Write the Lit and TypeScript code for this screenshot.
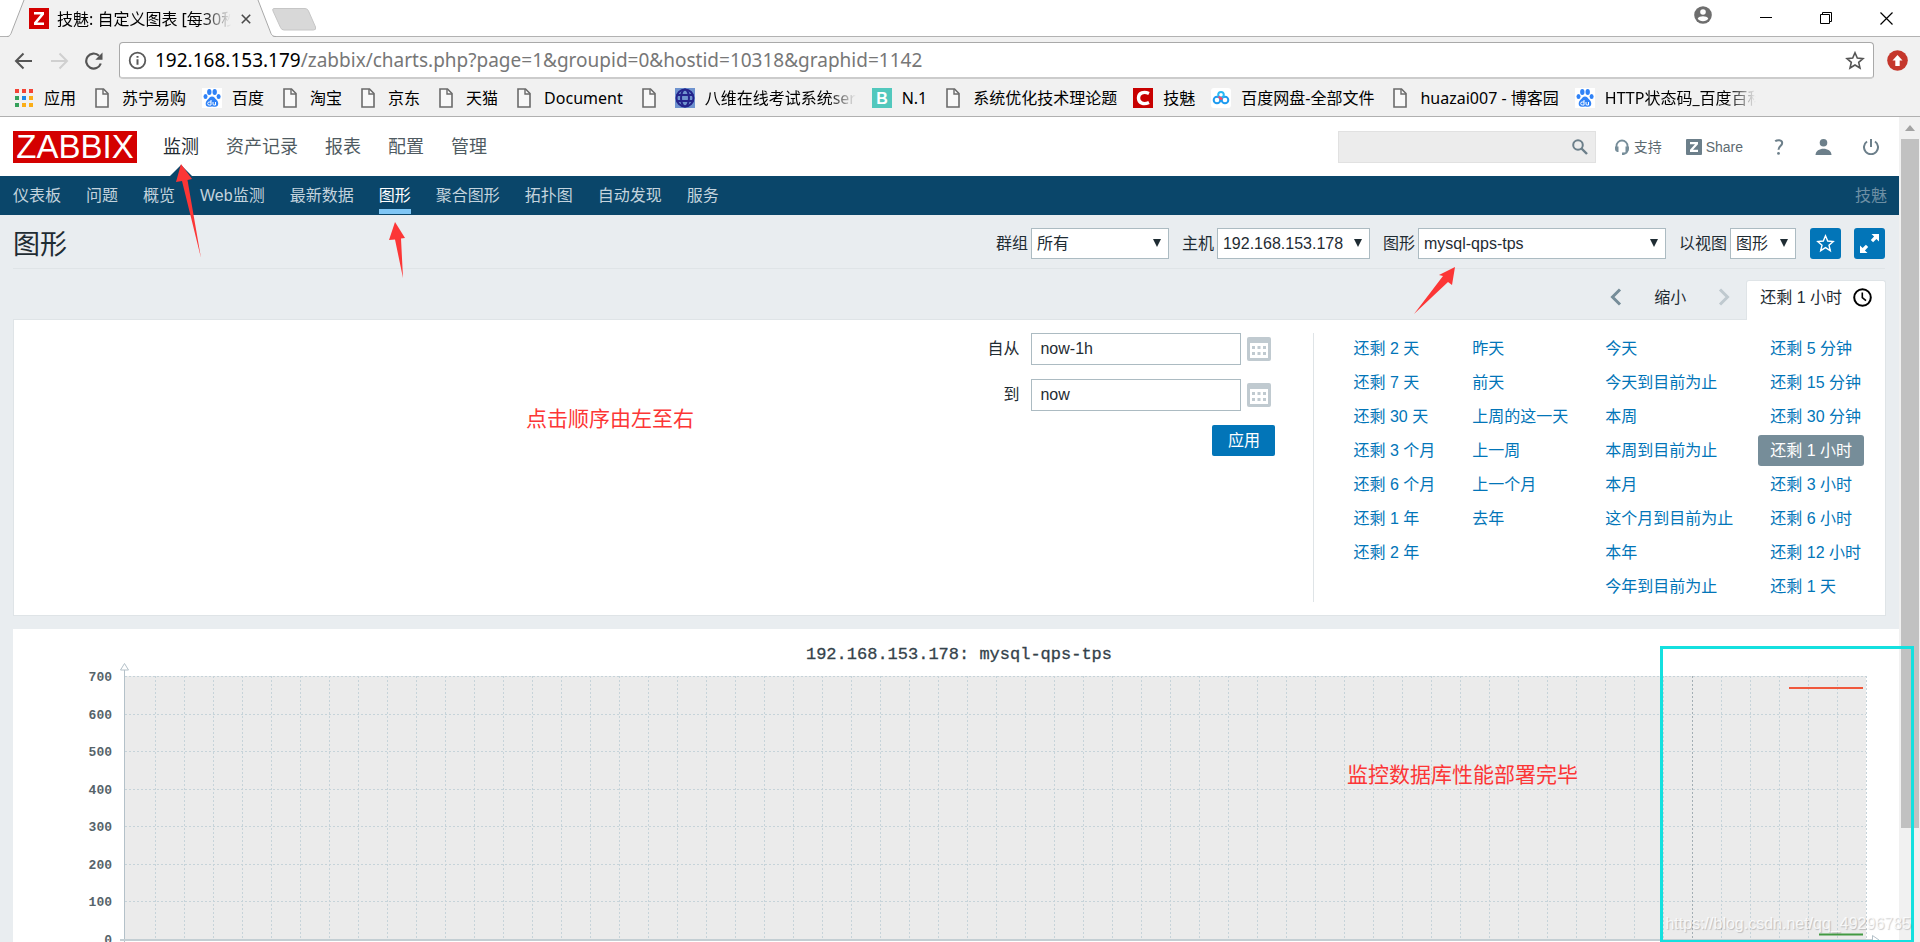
import { LitElement, html, svg, css, TemplateResult } from "lit";
import { customElement, state } from "lit/decorators.js";

type IconName = "apps" | "file" | "paw" | "globe" | "b" | "c" | "pan";

const bookmarks: { icon: IconName; text: string; fade?: boolean }[] = [
  { icon: "apps", text: "应用" },
  { icon: "file", text: "苏宁易购" },
  { icon: "paw", text: "百度" },
  { icon: "file", text: "淘宝" },
  { icon: "file", text: "京东" },
  { icon: "file", text: "天猫" },
  { icon: "file", text: "Document" },
  { icon: "file", text: "" },
  { icon: "globe", text: "八维在线考试系统ser", fade: true },
  { icon: "b", text: "N.1" },
  { icon: "file", text: "系统优化技术理论题" },
  { icon: "c", text: "技魅" },
  { icon: "pan", text: "百度网盘-全部文件" },
  { icon: "file", text: "huazai007 - 博客园" },
  { icon: "paw", text: "HTTP状态码_百度百科", fade: true },
];

const mainMenu = ["监测", "资产记录", "报表", "配置", "管理"];
const subMenu = ["仪表板", "问题", "概览", "Web监测", "最新数据", "图形", "聚合图形", "拓扑图", "自动发现", "服务"];

const ranges = [
  ["还剩 2 天", "还剩 7 天", "还剩 30 天", "还剩 3 个月", "还剩 6 个月", "还剩 1 年", "还剩 2 年"],
  ["昨天", "前天", "上周的这一天", "上一周", "上一个月", "去年"],
  ["今天", "今天到目前为止", "本周", "本周到目前为止", "本月", "这个月到目前为止", "本年", "今年到目前为止"],
  ["还剩 5 分钟", "还剩 15 分钟", "还剩 30 分钟", "还剩 1 小时", "还剩 3 小时", "还剩 6 小时", "还剩 12 小时", "还剩 1 天"],
];

const icons: Record<IconName, TemplateResult> = {
  apps: html`<svg width="20" height="20" viewBox="0 0 20 20">
    ${["#f44336", "#f44336", "#f44336", "#34a05a", "#1e88e5", "#fbae17", "#34a05a", "#fbae17", "#fbae17"].map(
      (c, i) => svg`<rect x=${1 + (i % 3) * 7} y=${1 + Math.floor(i / 3) * 7} width="4" height="4" fill=${c} />`
    )}
  </svg>`,
  file: html`<svg width="20" height="20" viewBox="0 0 20 20">
    <path d="M4 1h7.500l4.500 4.500V19H4z" fill="#f8f8f8" stroke="#6b6b6b" stroke-width="1.600" />
    <path d="M11 1v5h5" fill="none" stroke="#6b6b6b" stroke-width="1.400" />
  </svg>`,
  paw: html`<svg width="20" height="20" viewBox="0 0 20 20">
    <rect width="20" height="20" fill="#fff" />
    <g fill="#2f82f7">
      <ellipse cx="7.300" cy="4" rx="2.200" ry="3" />
      <ellipse cx="12.700" cy="4" rx="2.200" ry="3" />
      <ellipse cx="3.500" cy="8.500" rx="2" ry="2.600" />
      <ellipse cx="16.600" cy="8.500" rx="2" ry="2.600" />
      <path d="M10 8.500c2 0 3 1.800 4.500 3.300 2.500 2.300 2.600 7-1.300 7-1.300 0-2-.3-3.200-.3s-2 .3-3.200.3c-3.900 0-3.800-4.700-1.300-7C7 10.300 8 8.500 10 8.500z" />
    </g>
    <path d="M9 12v5H7.200a1.400 1.400 0 0 1 0-3H9M11 14v2a1 1 0 0 0 1 1h1.500v-3" fill="none" stroke="#fff" stroke-width="1" />
  </svg>`,
  globe: html`<svg width="20" height="20" viewBox="0 0 20 20">
    <rect width="20" height="20" fill="#6f93cf" />
    <g fill="none" stroke="#24248c" stroke-width="2">
      <circle cx="10" cy="10" r="8.500" />
      <ellipse cx="10" cy="10" rx="4" ry="8.500" />
      <path d="M1.500 7h17M1.500 13h17" />
    </g>
  </svg>`,
  b: html`<svg width="20" height="20" viewBox="0 0 20 20">
    <rect width="20" height="20" fill="#52c8bd" />
    <text x="10" y="16" text-anchor="middle" font-family="Liberation Sans" font-weight="700" font-size="16" fill="#fff">B</text>
  </svg>`,
  c: html`<svg width="20" height="20" viewBox="0 0 20 20">
    <rect width="20" height="20" fill="#c80000" />
    <path d="M16 5.500c-5-2.300-10.500-1-10.500 4.500s5.500 6.800 10.500 4.500" fill="none" stroke="#fff" stroke-width="3.400" />
  </svg>`,
  pan: html`<svg width="20" height="20" viewBox="0 0 20 20">
    <rect width="20" height="20" rx="3" fill="#fff" />
    <g fill="none" stroke-width="2">
      <circle cx="6" cy="12" r="3.300" stroke="#1e9bf0" />
      <circle cx="14" cy="12" r="3.300" stroke="#1e9bf0" />
      <circle cx="10" cy="6.800" r="2.800" stroke="#27b8f5" />
      <path d="M7.500 8.500A3 3 0 0 0 10 9.800" stroke="#ef4b6c" />
    </g>
    <circle cx="10" cy="10.500" r="1.600" fill="#ef4b6c" />
  </svg>`,
};

@customElement("browser-chrome")
class BrowserChrome extends LitElement {
  static styles = css`
    :host {
      display: block;
      background: #f1f1f1;
      border-bottom: 1px solid #b0b0b0;
      font: 16px/20px "Noto Sans", "Noto Sans CJK SC", sans-serif;
      color: #000;
    }
    * { box-sizing: border-box; }
    svg { display: block; flex: none; }
    button { border: 0; background: none; padding: 0; font: inherit; color: inherit; }
    .tabs {
      display: flex;
      height: 37px;
      background: #fff;
      border-bottom: 1px solid #b2b2b2;
    }
    .tab {
      position: relative;
      width: 270px;
      height: 37px;
      margin-left: 7px;
      display: flex;
      align-items: center;
      padding: 0 26px 0 22px;
    }
    .tab-shape { position: absolute; left: 0; top: 0; }
    .tab > :not(.tab-shape) { position: relative; }
    .title {
      flex: 1;
      margin: 0 10px 0 8px;
      white-space: nowrap;
      overflow: hidden;
      -webkit-mask-image: linear-gradient(90deg, #000 calc(100% - 28px), transparent);
      mask-image: linear-gradient(90deg, #000 calc(100% - 28px), transparent);
    }
    .new-tab { margin: 8px 0 0 -5px; height: 22px; }
    .window-buttons { display: flex; margin: 0 4px 0 auto; }
    .window-buttons button { width: 60px; height: 36px; display: grid; place-items: center; }
    .window-buttons button:first-child { width: 66px; height: 30px; }
    .toolbar { display: flex; align-items: center; height: 37px; margin-top: 5px; padding: 0 12px 0 14px; }
    .toolbar button { margin-right: 15px; }
    .toolbar button:last-child { margin: 0 0 0 13px; }
    .address {
      flex: 1;
      display: flex;
      align-items: center;
      height: 37px;
      padding: 0 8px;
      background: #fff;
      border: 1px solid #a9a9a9;
      border-bottom: 2px solid #ccc;
      border-radius: 4px;
    }
    .url { flex: 1; margin-left: 8px; font-size: 19px; line-height: 24px; color: #777; }
    .url b { font-weight: 400; color: #000; }
    .toolbar .address button { margin: 0; }
    .bookmarks { display: flex; gap: 16px; height: 37px; align-items: center; padding: 0 14px; }
    .bookmarks a { display: flex; align-items: center; gap: 10px; color: #000; text-decoration: none; white-space: nowrap; }
    .fade {
      width: 151px;
      overflow: hidden;
      -webkit-mask-image: linear-gradient(90deg, #000 calc(100% - 28px), transparent);
      mask-image: linear-gradient(90deg, #000 calc(100% - 28px), transparent);
    }
  `;

  render() {
    return html`
      <div class="tabs">
        <div class="tab">
          <svg class="tab-shape" width="270" height="37" viewBox="0 0 270 37">
            <path d="M0 37c2 0 3-1 4-3L17 0h234l13 34c1 2 2 3 5 3z" fill="#f1f1f1" />
            <path d="M0 36.500c2 0 3-1 4-3L17 0M251 0l13 33.500c1 2 2 3 5 3" fill="none" stroke="#a8a8a8" />
          </svg>
          <svg width="20" height="21" viewBox="0 0 20 21">
            <rect width="20" height="21" fill="#d40000" />
            <path d="M5 4h10v2.500L8.300 14.500H15V17H5v-2.500L11.700 6.500H5z" fill="#fff" />
          </svg>
          <span class="title">技魅: 自定义图表 [每30秒</span>
          <button aria-label="关闭标签页">
            <svg width="10" height="10" viewBox="0 0 10 10"><path d="M.8.8l8.400 8.400M9.200.8L.8 9.200" stroke="#4a4a4a" stroke-width="1.600" /></svg>
          </button>
        </div>
        <button class="new-tab" aria-label="新标签页">
          <svg width="45" height="23" viewBox="0 0 45 23"><path d="M2 .5h31q2.500 0 3.500 2.500l7 16q1 3-2 3H12q-2.500 0-3.500-2.500L1 3Q0 .5 2 .5z" fill="#d8d8d8" stroke="#c6c6c6" /></svg>
        </button>
        <div class="window-buttons">
          <button aria-label="用户">
            <svg width="18" height="18" viewBox="0 0 18 18"><circle cx="9" cy="9" r="8.800" fill="#6e6e6e" /><circle cx="9" cy="6" r="2.800" fill="#fff" /><path d="M3.700 12.500c1.500-3 9.100-3 10.600 0-1.800 3.600-8.800 3.600-10.600 0z" fill="#fff" /></svg>
          </button>
          <button aria-label="最小化"><svg width="12" height="12" viewBox="0 0 12 12"><path d="M0 5.500h12" stroke="#000" /></svg></button>
          <button aria-label="还原"><svg width="12" height="12" viewBox="0 0 12 12"><path d="M.5 2.500h9v9h-9zM2.500 2.500v-2h9v9h-2" fill="none" stroke="#000" /></svg></button>
          <button aria-label="关闭"><svg width="13" height="13" viewBox="0 0 13 13"><path d="M.5.5l12 12M12.500.5l-12 12" stroke="#000" stroke-width="1.200" /></svg></button>
        </div>
      </div>
      <div class="toolbar">
        <button aria-label="后退"><svg width="20" height="18" viewBox="0 0 20 18"><path d="M18 9H2.500M9.500 1.500L2 9l7.500 7.500" fill="none" stroke="#555" stroke-width="2" /></svg></button>
        <button aria-label="前进"><svg width="20" height="18" viewBox="0 0 20 18"><path d="M2 9h15.500M10.500 1.500L18 9l-7.500 7.500" fill="none" stroke="#d0d0d0" stroke-width="2" /></svg></button>
        <button aria-label="重新加载"><svg width="20" height="18" viewBox="0 0 20 18"><path d="M16.800 11.500A7.500 7.500 0 1 1 15 3.700" fill="none" stroke="#555" stroke-width="2.200" /><path d="M18.500.5v7.200h-7.200z" fill="#555" /></svg></button>
        <div class="address">
          <svg width="19" height="19" viewBox="0 0 19 19"><circle cx="9.500" cy="9.500" r="7.800" fill="none" stroke="#5a5a5a" stroke-width="1.800" /><path d="M9.500 5v1.800M9.500 8.300v5.500" stroke="#5a5a5a" stroke-width="2" /></svg>
          <span class="url"><b>192.168.153.179</b>/zabbix/charts.php?page=1&amp;groupid=0&amp;hostid=10318&amp;graphid=1142</span>
          <button aria-label="收藏"><svg width="20" height="19" viewBox="0 0 20 19"><path d="M10 1.800l2.300 5.300 5.700.5-4.300 3.800 1.300 5.600-5-3-5 3 1.300-5.600L2 7.600l5.700-.5z" fill="none" stroke="#555" stroke-width="1.600" /></svg></button>
        </div>
        <button aria-label="更新"><svg width="21" height="21" viewBox="0 0 21 21"><circle cx="10.500" cy="10.500" r="10.300" fill="#c5372c" /><path d="M10.500 5l5 5.500h-2.800V16H8.300v-5.500H5.500z" fill="#fff" /></svg></button>
      </div>
      <nav class="bookmarks">
        ${bookmarks.map(
          (b) => html`<a href="#" aria-label=${b.text || "书签"}>${icons[b.icon]}${b.text ? html`<span class=${b.fade ? "fade" : ""}>${b.text}</span>` : ""}</a>`
        )}
      </nav>
    `;
  }
}

@customElement("traffic-chart")
class TrafficChart extends LitElement {
  static styles = css`
    :host { display: block; background: #fff; }
    svg { display: block; width: 100%; height: auto; }
    .title { font: 17px "Liberation Mono", monospace; fill: #35434b; stroke: #35434b; stroke-width: 0.3px; }
    .label { font: 700 13px "Liberation Mono", monospace; fill: #56636a; }
    .grid { stroke: #c6d3d9; stroke-dasharray: 2 2; }
    .hour { stroke: #a3aeb4; stroke-dasharray: 2 2; }
    .axis { stroke: #b4c1c9; fill: none; }
  `;

  render() {
    const left = 112;
    const right = 1853;
    const top = 47;
    const bottom = 310;
    const values = [700, 600, 500, 400, 300, 200, 100, 0];
    const y = (v: number) => Math.round(bottom - (v / 700) * (bottom - top)) + 0.5;
    return html`
      <svg viewBox="0 0 1886 340" role="img" aria-label="192.168.153.178: mysql-qps-tps">
        <text class="title" x="946" y="30" text-anchor="middle">192.168.153.178: mysql-qps-tps</text>
        <rect x=${left} y=${top} width=${right - left} height=${bottom - top} fill="#ebebeb" />
        ${values.slice(0, -1).map((v) => svg`<path class="grid" d="M${left} ${y(v)}H${right}" />`)}
        ${Array.from({ length: 60 }, (_, i) => {
          const x = Math.round(142 + i * 29) + 0.5;
          return svg`<path class=${i === 53 ? "hour" : "grid"} d="M${x} ${top}V${bottom}" />`;
        })}
        ${values.map((v) => svg`<text class="label" x="99" y=${y(v) + 4} text-anchor="end">${v}</text>`)}
        <path class="axis" d="M111.500 41V315" />
        <path d="M107 311H1860" stroke="#c3ced3" stroke-width="2" />
        <path class="axis" d="M111.500 34.500l4 6.500h-8z" fill="#fff" />
        <path class="axis" d="M1866 311l-6.500-4.500v9z" fill="#fff" />
        <path d="M1776 59H1850" stroke="#f0583c" stroke-width="2" />
        <path d="M1806 305.500H1850" stroke="#429a42" stroke-width="2" />
      </svg>
    `;
  }
}

@customElement("time-filter")
class TimeFilter extends LitElement {
  @state() selected = "还剩 1 小时";

  static styles = css`
    :host { display: block; margin: 11px 13px 0; font: 16px/31px "Liberation Sans", "Noto Sans CJK SC", sans-serif; color: #1f2c33; }
    * { box-sizing: border-box; }
    svg { display: block; }
    button { border: 0; background: none; padding: 0; font: inherit; color: inherit; }
    .tabs { position: relative; display: flex; justify-content: flex-end; height: 40px; }
    .nav { display: flex; align-items: center; gap: 32px; margin: 0 16px 6px 0; }
    .current {
      display: flex;
      align-items: center;
      gap: 11px;
      padding: 0 13px 6px;
      background: #fff;
      border: 1px solid #dfe4e7;
      border-bottom: 0;
      border-radius: 3px 3px 0 0;
    }
    .panel {
      display: flex;
      justify-content: flex-end;
      margin-top: -1px;
      padding: 13px 12px;
      background: #fff;
      border: 1px solid #dfe4e7;
    }
    .form { display: grid; grid-template-columns: auto 210px 34px; grid-auto-rows: 32px; gap: 14px 0; margin-right: 38px; align-content: start; }
    .form label { text-align: right; padding-right: 12px; }
    .form input {
      height: 32px;
      padding: 0 8px;
      font: inherit;
      color: inherit;
      background: #fff;
      border: 1px solid #acbbc2;
    }
    .calendar { display: grid; place-items: center; padding-left: 2px; }
    .apply {
      grid-column: 2 / 4;
      justify-self: end;
      width: 63px;
      height: 31px;
      border-radius: 2px;
      color: #fff;
      background: #0275b8;
    }
    .ranges { display: flex; gap: 13px; padding-left: 27px; border-left: 1px solid #dfe4e7; }
    .column { display: flex; flex-direction: column; align-items: flex-start; gap: 3px; }
    .column a { padding: 0 12px; height: 31px; color: #0275b8; text-decoration: none; border-radius: 3px; white-space: nowrap; }
    .column a.on { color: #fff; background: #768d99; }
  `;

  private field(id: string, label: string, value: string) {
    return html`
      <label for=${id}>${label}</label>
      <input id=${id} type="text" .value=${value} />
      <button type="button" class="calendar" aria-label="日历">
        <svg width="24" height="24" viewBox="0 0 24 24">
          <rect width="24" height="24" rx="2" fill="#c0cad0" />
          <rect x="3" y="6" width="18" height="15" fill="#fff" />
          ${[5, 10.5, 16].map((x) => [9, 15].map((y) => svg`<rect x=${x} y=${y} width="3" height="3" fill="#c0cad0" />`))}
        </svg>
      </button>
    `;
  }

  render() {
    return html`
      <div class="tabs">
        <div class="nav">
          <button aria-label="上一段"><svg width="12" height="18" viewBox="0 0 12 18"><path d="M10 1.500L2.500 9l7.500 7.500" fill="none" stroke="#768d99" stroke-width="3" /></svg></button>
          <button>缩小</button>
          <button aria-label="下一段"><svg width="12" height="18" viewBox="0 0 12 18"><path d="M2 1.500L9.500 9 2 16.500" fill="none" stroke="#bfc9cf" stroke-width="3" /></svg></button>
        </div>
        <button class="current">
          ${this.selected}
          <svg width="19" height="19" viewBox="0 0 19 19"><circle cx="9.500" cy="9.500" r="8.300" fill="none" stroke="#000" stroke-width="2" /><path d="M9.300 4.500v5.200l3.700 3" fill="none" stroke="#000" stroke-width="1.600" /></svg>
        </button>
      </div>
      <div class="panel">
        <form class="form" @submit=${(e: Event) => e.preventDefault()}>
          ${this.field("from", "自从", "now-1h")} ${this.field("to", "到", "now")}
          <button class="apply">应用</button>
        </form>
        <div class="ranges">
          ${ranges.map(
            (col) => html`<div class="column">
              ${col.map(
                (r) => html`<a href="#" class=${r === this.selected ? "on" : ""} @click=${(e: Event) => { e.preventDefault(); this.selected = r; }}>${r}</a>`
              )}
            </div>`
          )}
        </div>
      </div>
    `;
  }
}

@customElement("app-root")
class AppRoot extends LitElement {
  static styles = css`
    :host {
      position: relative;
      display: flex;
      flex-direction: column;
      height: 100vh;
      overflow: hidden;
      font: 16px/20px "Liberation Sans", "Noto Sans CJK SC", sans-serif;
      color: #1f2c33;
      background: #e9edf0;
    }
    * { box-sizing: border-box; }
    svg { display: block; flex: none; }
    a { text-decoration: none; color: inherit; }
    button { border: 0; background: none; padding: 0; font: inherit; color: inherit; }
    .viewport { flex: 1; min-height: 0; display: flex; }
    .page { flex: 1; min-width: 0; overflow: hidden; }
    .scrollbar { width: 21px; background: #f1f1f1; display: flex; flex-direction: column; align-items: center; }
    .scrollbar svg { margin: 8px 0 8px; }
    .thumb { width: 18px; height: 83.5%; background: #c1c1c1; }

    .header { display: flex; align-items: center; height: 59px; padding: 0 20px 0 13px; background: #fff; }
    .logo { width: 124px; height: 32px; background: #d40000; color: #fff; font-size: 33px; line-height: 32px; text-align: center; }
    .main { display: flex; gap: 27px; margin-left: 26px; font-size: 18px; line-height: 24px; color: #4f5b62; }
    .main a { position: relative; }
    .main .on { color: #1f2c33; }
    .main .on svg { position: absolute; left: 6px; top: 30px; }
    .search {
      display: flex;
      align-items: center;
      width: 258px;
      height: 32px;
      margin-left: auto;
      padding-right: 7px;
      background: #ececec;
      border: 1px solid #e1e1e1;
    }
    .search input { flex: 1; min-width: 0; height: 30px; border: 0; background: none; font: inherit; }
    .tools { display: flex; align-items: center; margin-left: 18px; gap: 24px; font-size: 14px; color: #5d6a71; }
    .tools a { display: flex; align-items: center; gap: 4px; }
    .tools .glyph { margin-left: 7px; }

    .sub { display: flex; height: 39px; padding: 0 12px 0 13px; gap: 25px; align-items: stretch; background: #0a466a; color: #c3d3dd; line-height: 40px; }
    .sub .on { color: #fff; border-bottom: 5px solid #7fc6f5; margin-bottom: 1px; }
    .sub .server { margin-left: auto; color: #6d8fa4; }

    .heading { display: flex; align-items: flex-start; height: 54px; margin: 0 14px 0 13px; padding-top: 13px; border-bottom: 1px solid #dfe4e7; }
    h1 { margin: 0 auto 0 0; font-size: 27px; line-height: 34px; font-weight: 400; }
    .field { display: flex; align-items: center; gap: 3px; margin-right: 13px; }
    .field label { line-height: 31px; }
    .select { position: relative; display: flex; }
    .select svg { position: absolute; right: 8px; top: 11px; pointer-events: none; }
    select {
      appearance: none;
      height: 31px;
      margin: 0;
      padding: 0 5px;
      font: inherit;
      color: inherit;
      background: #fff;
      border: 1px solid #acbbc2;
      border-radius: 0;
    }
    .group { width: 138px; }
    .host { width: 153px; }
    .graph { width: 248px; }
    .view { width: 66px; }
    .square { width: 31px; height: 31px; border-radius: 3px; background: #0275b8; display: grid; place-items: center; margin-left: 13px; }
    .field + .square { margin-left: 1px; }

    traffic-chart { margin: 13px 0 0 13px; }

    .notes { position: absolute; inset: 0; pointer-events: none; }
    .note { position: absolute; font-size: 21px; line-height: 30px; color: #fc3636; white-space: nowrap; }
    .note-order { left: 526px; top: 404px; }
    .note-done { left: 1347px; top: 760px; }
    .arrows { position: absolute; left: 0; top: 0; }
    .frame { position: absolute; left: 1660px; top: 646px; width: 254px; height: 297px; border: 3px solid #14e0df; }
    .watermark { position: absolute; right: 9px; bottom: 7px; font-size: 16px; line-height: 22px; color: rgba(255, 255, 255, 0.8); text-shadow: 1px 1px 1px rgba(0, 0, 0, 0.2); }
  `;

  private select(id: string, label: string, value: string) {
    return html`<div class="field">
      <label for=${id}>${label}</label>
      <span class="select">
        <select id=${id} class=${id}><option>${value}</option></select>
        <svg width="8" height="8" viewBox="0 0 8 8"><path d="M0 0h8L4 8z" fill="#1f2c33" /></svg>
      </span>
    </div>`;
  }

  render() {
    return html`
      <browser-chrome></browser-chrome>
      <div class="viewport">
        <div class="page">
          <header class="header">
            <a class="logo" href="#">ZABBIX</a>
            <nav class="main">
              ${mainMenu.map(
                (m, i) => html`<a href="#" class=${i === 0 ? "on" : ""}>${m}${i === 0
                  ? html`<svg width="24" height="12" viewBox="0 0 24 12"><path d="M0 12L12 0l12 12z" fill="#0a466a" /></svg>`
                  : ""}</a>`
              )}
            </nav>
            <div class="search">
              <input type="text" aria-label="搜索" />
              <svg width="16" height="16" viewBox="0 0 16 16"><circle cx="6" cy="6" r="4.800" fill="none" stroke="#6c7f8a" stroke-width="2" /><path d="M9.500 9.500l5.500 5.500" stroke="#6c7f8a" stroke-width="2.400" /></svg>
            </div>
            <div class="tools">
              <a href="#">
                <svg width="16" height="16" viewBox="0 0 16 16"><path d="M2.500 11V7a5.500 5.500 0 0 1 11 0v4c0 2.500-1.500 3.500-4 3.700" fill="none" stroke="#768d99" stroke-width="1.800" /><path d="M1 7.500h3.500V13H3.200Q1 12.500 1 10zM15 7.500h-3.500V13h1.300Q15 12.500 15 10zM8 13.500h2.500V16H8z" fill="#768d99" /></svg>
                支持</a>
              <a href="#">
                <svg width="16" height="16" viewBox="0 0 16 16"><rect width="16" height="16" rx="1" fill="#6c7f8a" /><path d="M4 3h8v2.200L7 10.800h5V13H4v-2.200l5-5.600H4z" fill="#fff" /></svg>
                Share</a>
              <a class="glyph" href="#" aria-label="帮助"><svg width="10" height="16" viewBox="0 0 10 16"><path d="M1.200 2.300C3 .8 8.200.3 8.200 4c0 3-3.700 3.200-3.700 6.700" fill="none" stroke="#6c7f8a" stroke-width="2" /><circle cx="4.500" cy="14.400" r="1.400" fill="#6c7f8a" /></svg></a>
              <a class="glyph" href="#" aria-label="用户资料"><svg width="17" height="16" viewBox="0 0 17 16"><circle cx="8.500" cy="3.800" r="3.800" fill="#6c7f8a" /><path d="M.5 16c0-8.500 16-8.500 16 0z" fill="#6c7f8a" /></svg></a>
              <a class="glyph" href="#" aria-label="退出"><svg width="16" height="16" viewBox="0 0 16 16"><path d="M4 2.500a7 7 0 1 0 8 0M8 0v8" fill="none" stroke="#6c7f8a" stroke-width="2" /></svg></a>
            </div>
          </header>
          <nav class="sub">
            ${subMenu.map((m) => html`<a href="#" class=${m === "图形" ? "on" : ""}>${m}</a>`)}
            <span class="server">技魅</span>
          </nav>
          <div class="heading">
            <h1>图形</h1>
            ${this.select("group", "群组", "所有")} ${this.select("host", "主机", "192.168.153.178")}
            ${this.select("graph", "图形", "mysql-qps-tps")} ${this.select("view", "以视图", "图形")}
            <button class="square" aria-label="添加到收藏"><svg width="19" height="19" viewBox="0 0 19 19"><path d="M9.500 1.800l2.200 5.200 5.500.5-4.200 3.700 1.300 5.500-4.800-3-4.800 3L6 11.200 1.800 7.500l5.500-.5z" fill="none" stroke="#fff" stroke-width="1.400" /></svg></button>
            <button class="square" aria-label="全屏"><svg width="19" height="19" viewBox="0 0 19 19"><path d="M11.500 0H19v7.500l-2.600-2.600-3.300 3.300-2.300-2.300 3.300-3.300zM0 11.500V19h7.500l-2.600-2.600 3.300-3.300-2.300-2.300-3.300 3.300z" fill="#fff" /></svg></button>
          </div>
          <time-filter></time-filter>
          <traffic-chart></traffic-chart>
        </div>
        <div class="scrollbar">
          <svg width="10" height="6" viewBox="0 0 10 6"><path d="M0 6l5-6 5 6z" fill="#a3a3a3" /></svg>
          <div class="thumb"></div>
        </div>
      </div>
      <div class="notes">
        <svg class="arrows" width="1500" height="330" viewBox="0 0 1500 330" fill="#fc3636">
          <path d="M181 164l11 15-4.500 1L201 258 182 181l-6 1z" />
          <path d="M395 222l10 16-4 .5L403 278 395 239.500l-6 .5z" />
          <path d="M1455 267l-3 18-4-3L1414 314l29-38-4-1z" />
        </svg>
        <span class="note note-order">点击顺序由左至右</span>
        <span class="note note-done">监控数据库性能部署完毕</span>
        <div class="frame"></div>
        <span class="watermark">https://blog.csdn.net/qq_49296785</span>
      </div>
    `;
  }
}
